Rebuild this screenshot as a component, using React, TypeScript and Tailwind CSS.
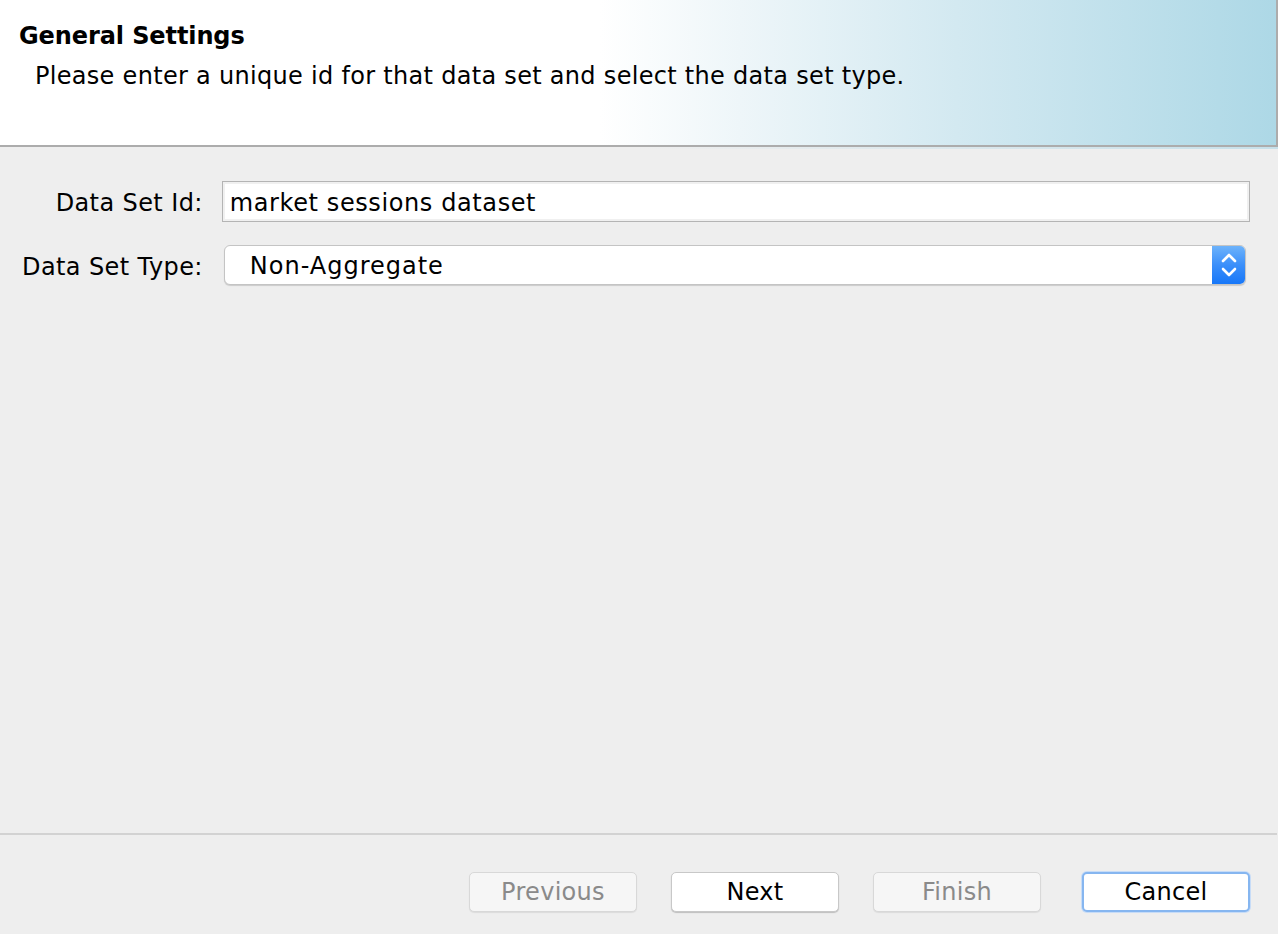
import React from "react";

function Btn({ label, disabled, focused }: { label: string; disabled?: boolean; focused?: boolean }) {
  return (
    <div
      className={
        "w-[168px] h-[40px] rounded-[5px] flex items-center justify-center text-[24px] tracking-[0.3px] " +
        (disabled
          ? "bg-[#f6f6f6] text-[#8a8a8a] border border-[#d8d8d8] shadow-[0_1px_1px_rgba(0,0,0,0.08)]"
          : focused
          ? "bg-white text-black border-2 border-[#86b6f0] shadow-[0_0_0_1px_#c7dcf7]"
          : "bg-white text-black border border-[#c8c8c8] shadow-[0_1px_1px_rgba(0,0,0,0.2)]")
      }
    >
      {label}
    </div>
  );
}

export default function App() {
  return (
    <div
      className="w-[1278px] h-[934px] bg-[#eeeeee] flex flex-col overflow-hidden text-black"
      style={{ fontFamily: '"DejaVu Sans", "Open Sans", sans-serif' }}
    >
      <div className="h-[147px] shrink-0 border-b-2 border-r-2 border-[#acacac] bg-[linear-gradient(90deg,#ffffff_0%,#ffffff_47%,#eef6f9_58%,#d3e9f1_75%,#add8e6_100%)] pl-[19px] pt-[21px]">
        <div className="text-[24px] font-bold leading-[30px] tracking-[-0.1px]">General Settings</div>
        <div className="text-[24px] leading-[30px] pl-[16px] mt-[10px] tracking-[0.3px]">
          Please enter a unique id for that data set and select the data set type.
        </div>
      </div>
      <div className="h-[2px] shrink-0 bg-[linear-gradient(90deg,#eeeeee_0%,#eeeeee_50%,#c6e0ea_100%)]" />
      <div className="flex-1 flex flex-col">
        <div className="grid grid-cols-[auto_1fr] items-center gap-x-[19px] gap-y-[23px] pl-[22px] pr-[28px] pt-[32px]">
          <div className="text-right text-[24px] tracking-[0.4px] pt-[3px]">Data Set Id:</div>
          <div className="h-[41px] bg-white border border-[#b4b4b4] shadow-[inset_0_0_0_2px_#f0f0f0] flex items-center pl-[7px] pt-[2px] text-[24px] tracking-[0.6px]">
            market sessions dataset
          </div>
          <div className="text-right text-[24px] tracking-[0.4px] pt-[3px]">Data Set Type:</div>
          <div className="h-[40px] ml-[2px] mr-[4px] rounded-[6px] bg-white border border-[#c4c4c4] shadow-[0_1px_1px_rgba(0,0,0,0.15)] flex items-stretch overflow-hidden">
            <div className="flex-1 flex items-center pl-[25px] pt-[2px] text-[24px] tracking-[1px]">Non-Aggregate</div>
            <div className="w-[33px] bg-[linear-gradient(180deg,#6db3fb_0%,#3b8ffa_50%,#1777f8_100%)] flex items-center justify-center">
              <svg width="18" height="28" viewBox="0 0 18 28" fill="none" stroke="white" strokeWidth="2.6" strokeLinecap="round" strokeLinejoin="round">
                <path d="M3 10 L9 4 L15 10" />
                <path d="M3 18 L9 24 L15 18" />
              </svg>
            </div>
          </div>
        </div>
      </div>
      <div className="h-[2px] shrink-0 bg-[#d2d2d2] mr-[1px]" />
      <div className="h-[99px] shrink-0 flex items-start justify-end pt-[37px] pr-[28px]">
        <Btn label="Previous" disabled />
        <div className="w-[34px]" />
        <Btn label="Next" />
        <div className="w-[34px]" />
        <Btn label="Finish" disabled />
        <div className="w-[41px]" />
        <Btn label="Cancel" focused />
      </div>
    </div>
  );
}
